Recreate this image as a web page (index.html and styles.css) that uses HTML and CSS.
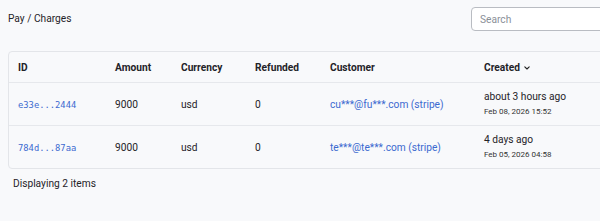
FILE: index.html
```html
<!DOCTYPE html>
<html>
<head>
<meta charset="utf-8">
<link rel="stylesheet" href="styles.css">
</head>
<body>
<div class="page">
  <div class="topbar">
    <div class="crumb">Pay / Charges</div>
    <input class="search" type="text" placeholder="Search">
  </div>
  <div class="card">
    <table class="tbl">
      <colgroup>
        <col class="c-id"><col class="c-amt"><col class="c-cur"><col class="c-ref"><col class="c-cust"><col class="c-created">
      </colgroup>
      <thead>
        <tr>
          <th>ID</th><th>Amount</th><th>Currency</th><th>Refunded</th><th>Customer</th>
          <th>Created <svg class="chev" width="8" height="6" viewBox="0 0 8 6"><path d="M1.8 1.8 L4 4 L6.2 1.8" fill="none" stroke="#222" stroke-width="1.1" stroke-linecap="round" stroke-linejoin="round"/></svg></th>
        </tr>
      </thead>
      <tbody>
        <tr>
          <td><a class="mono">e33e...2444</a></td><td>9000</td><td>usd</td><td>0</td>
          <td><a class="link">cu***@fu***.com (stripe)</a></td>
          <td><div class="rel">about 3 hours ago</div><div class="abs">Feb 08, 2026 15:52</div></td>
        </tr>
        <tr>
          <td><a class="mono">784d...87aa</a></td><td>9000</td><td>usd</td><td>0</td>
          <td><a class="link">te***@te***.com (stripe)</a></td>
          <td><div class="rel">4 days ago</div><div class="abs">Feb 05, 2026 04:58</div></td>
        </tr>
      </tbody>
    </table>
  </div>
  <div class="footer">Displaying 2 items</div>
</div>
</body>
</html>
```
FILE: styles.css
```css
html, body {
  margin: 0;
  padding: 0;
  background: #f8f9fb;
  overflow: hidden;
}
body {
  font-family: Roboto, Inter, sans-serif;
  color: #1f2328;
  font-size: 10.2px;
}
.page {
  width: 660px;
  padding: 0 8px;
}
.topbar {
  display: flex;
  justify-content: space-between;
  align-items: center;
  height: 38px;
}
.crumb {
  font-size: 10.2px;
  color: #1f2328;
  padding-bottom: 1px;
}
.search {
  width: 212px;
  height: 24px;
  box-sizing: border-box;
  border: 1px solid #b9bcc2;
  border-radius: 4px;
  background: #fff;
  font-family: Roboto, sans-serif;
  font-size: 10.2px;
  padding: 0 8px;
  margin-right: -15px;
}
.search::placeholder { color: #8a8f98; }
.card {
  margin-top: 13px;
  border: 1px solid #e3e5e9;
  border-radius: 4px;
  background: #f8f9fb;
  overflow: hidden;
}
.tbl {
  border-collapse: collapse;
  table-layout: fixed;
  width: 100%;
}
.c-id { width: 97px; }
.c-amt { width: 66px; }
.c-cur { width: 74px; }
.c-ref { width: 75px; }
.c-cust { width: 154px; }
.tbl th {
  text-align: left;
  font-weight: 700;
  font-size: 10.2px;
  height: 30px;
  padding: 0 9px;
  border-bottom: 1px solid #e6e8ec;
  white-space: nowrap;
}
.chev { vertical-align: middle; margin-left: 1px; }
.tbl td {
  height: 42px;
  padding: 0 9px;
  font-size: 10.2px;
  border-bottom: 1px solid #e6e8ec;
  white-space: nowrap;
  vertical-align: middle;
}
.tbl tbody tr:last-child td { border-bottom: none; }
.mono {
  font-family: "DejaVu Sans Mono", "Liberation Mono", monospace;
  font-size: 8.8px;
  color: #3c6ad0;
}
.link { color: #3c6ad0; }
.rel { font-size: 10.2px; line-height: 14px; }
.abs { font-size: 8px; line-height: 15px; color: #333; }
.footer {
  padding: 9px 5px;
  font-size: 10.2px;
}
```
